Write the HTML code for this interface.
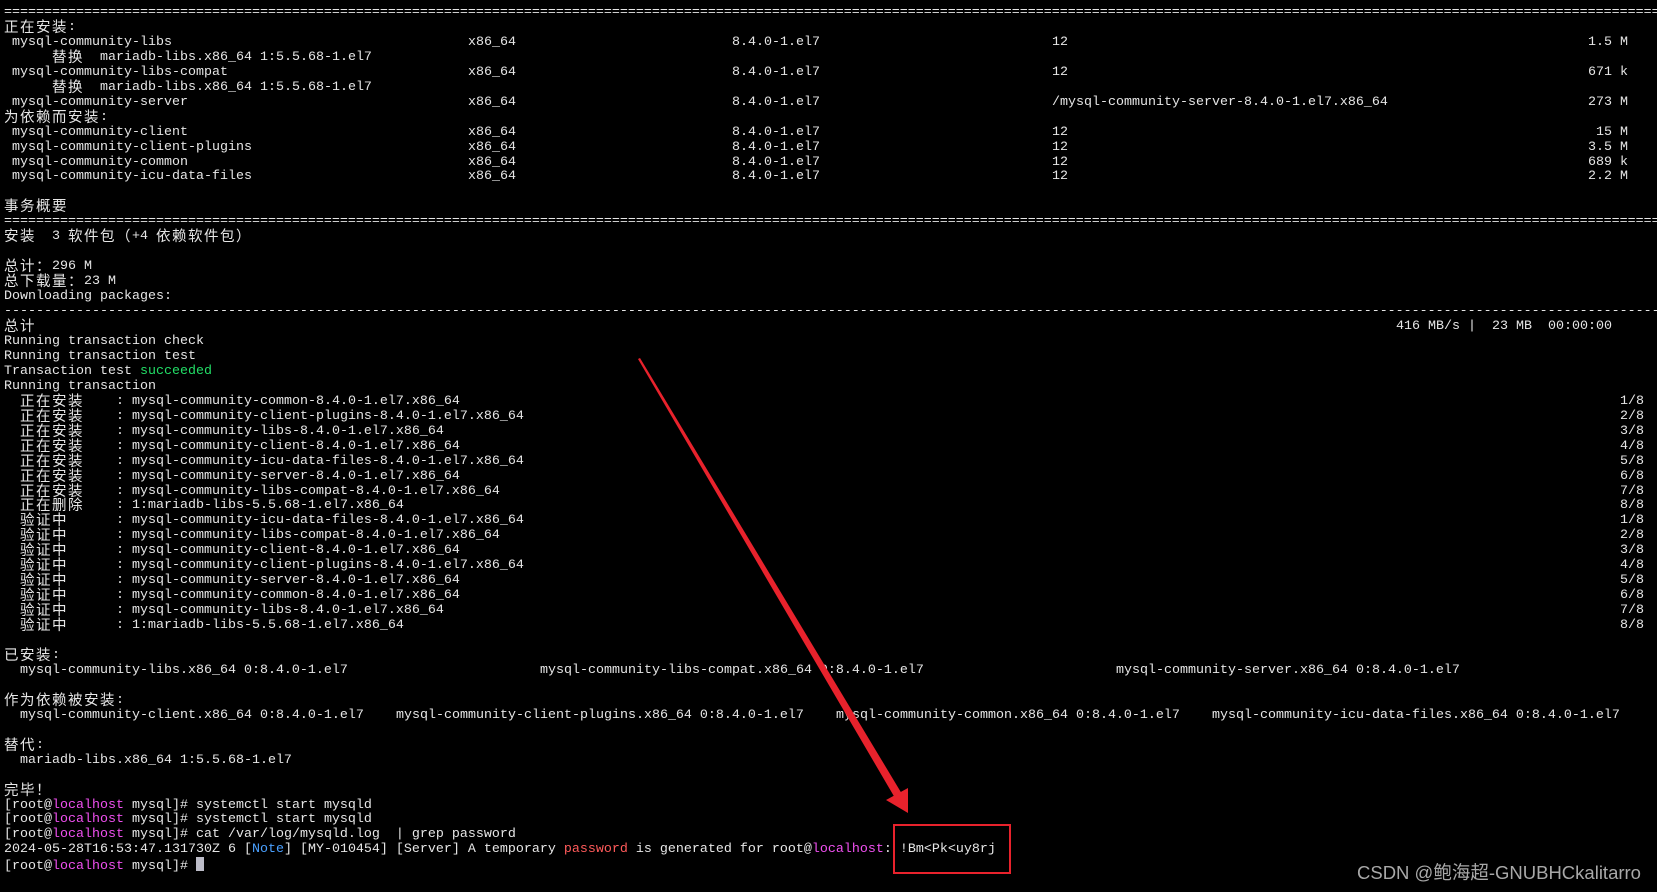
<!DOCTYPE html>
<html><head><meta charset="utf-8">
<style>
html,body{margin:0;padding:0;background:#000;width:1657px;height:892px;overflow:hidden;position:relative}
#t{position:absolute;left:4px;top:5px;font-family:"Liberation Mono","Noto Sans CJK SC",monospace;font-size:13.333px;color:#e6e6e6;width:1653px;overflow:hidden}
.l{position:relative;height:14.96px;line-height:15px;white-space:pre}
.l span.a{position:absolute;top:0}
.c{font-family:"Noto Sans CJK SC",sans-serif;font-size:14.5px;letter-spacing:1.5px;display:inline-block;height:15px;line-height:14px;vertical-align:top}
.m{color:#f050f0}.b{color:#4aa0ff}.r{color:#ff5a5a}.g{color:#22dd66}
.cur{display:inline-block;width:8px;height:14px;background:#bcbcc8;vertical-align:-2px}
#wm{position:absolute;left:1357px;top:859px;font-family:"Liberation Sans","Noto Sans CJK SC",sans-serif;font-size:18.5px;color:#a8a8a8;white-space:nowrap}
</style></head><body>
<div id="t">
<div class="l">====================================================================================================================================================================================================================</div>
<div class="l"><span class="c">正在安装</span>:</div>
<div class="l"> mysql-community-libs<span class="a" style="left:464px">x86_64</span><span class="a" style="left:728px">8.4.0-1.el7</span><span class="a" style="left:1048px">12</span><span class="a" style="left:1584px">1.5 M</span></div>
<div class="l">      <span class="c">替换</span>  mariadb-libs.x86_64 1:5.5.68-1.el7</div>
<div class="l"> mysql-community-libs-compat<span class="a" style="left:464px">x86_64</span><span class="a" style="left:728px">8.4.0-1.el7</span><span class="a" style="left:1048px">12</span><span class="a" style="left:1584px">671 k</span></div>
<div class="l">      <span class="c">替换</span>  mariadb-libs.x86_64 1:5.5.68-1.el7</div>
<div class="l"> mysql-community-server<span class="a" style="left:464px">x86_64</span><span class="a" style="left:728px">8.4.0-1.el7</span><span class="a" style="left:1048px">/mysql-community-server-8.4.0-1.el7.x86_64</span><span class="a" style="left:1584px">273 M</span></div>
<div class="l"><span class="c">为依赖而安装</span>:</div>
<div class="l"> mysql-community-client<span class="a" style="left:464px">x86_64</span><span class="a" style="left:728px">8.4.0-1.el7</span><span class="a" style="left:1048px">12</span><span class="a" style="left:1592px">15 M</span></div>
<div class="l"> mysql-community-client-plugins<span class="a" style="left:464px">x86_64</span><span class="a" style="left:728px">8.4.0-1.el7</span><span class="a" style="left:1048px">12</span><span class="a" style="left:1584px">3.5 M</span></div>
<div class="l"> mysql-community-common<span class="a" style="left:464px">x86_64</span><span class="a" style="left:728px">8.4.0-1.el7</span><span class="a" style="left:1048px">12</span><span class="a" style="left:1584px">689 k</span></div>
<div class="l"> mysql-community-icu-data-files<span class="a" style="left:464px">x86_64</span><span class="a" style="left:728px">8.4.0-1.el7</span><span class="a" style="left:1048px">12</span><span class="a" style="left:1584px">2.2 M</span></div>
<div class="l"> </div>
<div class="l"><span class="c">事务概要</span></div>
<div class="l">====================================================================================================================================================================================================================</div>
<div class="l"><span class="c">安装</span>  3 <span class="c">软件包（</span>+4 <span class="c">依赖软件包）</span></div>
<div class="l"> </div>
<div class="l"><span class="c">总计：</span>296 M</div>
<div class="l"><span class="c">总下载量：</span>23 M</div>
<div class="l">Downloading packages:</div>
<div class="l">--------------------------------------------------------------------------------------------------------------------------------------------------------------------------------------------------------------------------</div>
<div class="l"><span class="c">总计</span><span class="a" style="left:1392px">416 MB/s |  23 MB  00:00:00</span></div>
<div class="l">Running transaction check</div>
<div class="l">Running transaction test</div>
<div class="l">Transaction test <span class="g">succeeded</span></div>
<div class="l">Running transaction</div>
<div class="l">  <span class="c">正在安装</span>    : mysql-community-common-8.4.0-1.el7.x86_64<span class="a" style="left:1616px">1/8</span></div>
<div class="l">  <span class="c">正在安装</span>    : mysql-community-client-plugins-8.4.0-1.el7.x86_64<span class="a" style="left:1616px">2/8</span></div>
<div class="l">  <span class="c">正在安装</span>    : mysql-community-libs-8.4.0-1.el7.x86_64<span class="a" style="left:1616px">3/8</span></div>
<div class="l">  <span class="c">正在安装</span>    : mysql-community-client-8.4.0-1.el7.x86_64<span class="a" style="left:1616px">4/8</span></div>
<div class="l">  <span class="c">正在安装</span>    : mysql-community-icu-data-files-8.4.0-1.el7.x86_64<span class="a" style="left:1616px">5/8</span></div>
<div class="l">  <span class="c">正在安装</span>    : mysql-community-server-8.4.0-1.el7.x86_64<span class="a" style="left:1616px">6/8</span></div>
<div class="l">  <span class="c">正在安装</span>    : mysql-community-libs-compat-8.4.0-1.el7.x86_64<span class="a" style="left:1616px">7/8</span></div>
<div class="l">  <span class="c">正在删除</span>    : 1:mariadb-libs-5.5.68-1.el7.x86_64<span class="a" style="left:1616px">8/8</span></div>
<div class="l">  <span class="c">验证中</span>      : mysql-community-icu-data-files-8.4.0-1.el7.x86_64<span class="a" style="left:1616px">1/8</span></div>
<div class="l">  <span class="c">验证中</span>      : mysql-community-libs-compat-8.4.0-1.el7.x86_64<span class="a" style="left:1616px">2/8</span></div>
<div class="l">  <span class="c">验证中</span>      : mysql-community-client-8.4.0-1.el7.x86_64<span class="a" style="left:1616px">3/8</span></div>
<div class="l">  <span class="c">验证中</span>      : mysql-community-client-plugins-8.4.0-1.el7.x86_64<span class="a" style="left:1616px">4/8</span></div>
<div class="l">  <span class="c">验证中</span>      : mysql-community-server-8.4.0-1.el7.x86_64<span class="a" style="left:1616px">5/8</span></div>
<div class="l">  <span class="c">验证中</span>      : mysql-community-common-8.4.0-1.el7.x86_64<span class="a" style="left:1616px">6/8</span></div>
<div class="l">  <span class="c">验证中</span>      : mysql-community-libs-8.4.0-1.el7.x86_64<span class="a" style="left:1616px">7/8</span></div>
<div class="l">  <span class="c">验证中</span>      : 1:mariadb-libs-5.5.68-1.el7.x86_64<span class="a" style="left:1616px">8/8</span></div>
<div class="l"> </div>
<div class="l"><span class="c">已安装</span>:</div>
<div class="l">  mysql-community-libs.x86_64 0:8.4.0-1.el7<span class="a" style="left:536px">mysql-community-libs-compat.x86_64 0:8.4.0-1.el7</span><span class="a" style="left:1112px">mysql-community-server.x86_64 0:8.4.0-1.el7</span></div>
<div class="l"> </div>
<div class="l"><span class="c">作为依赖被安装</span>:</div>
<div class="l">  mysql-community-client.x86_64 0:8.4.0-1.el7<span class="a" style="left:392px">mysql-community-client-plugins.x86_64 0:8.4.0-1.el7</span><span class="a" style="left:832px">mysql-community-common.x86_64 0:8.4.0-1.el7</span><span class="a" style="left:1208px">mysql-community-icu-data-files.x86_64 0:8.4.0-1.el7</span></div>
<div class="l"> </div>
<div class="l"><span class="c">替代</span>:</div>
<div class="l">  mariadb-libs.x86_64 1:5.5.68-1.el7</div>
<div class="l"> </div>
<div class="l"><span class="c">完毕！</span></div>
<div class="l">[root@<span class="m">localhost</span> mysql]# systemctl start mysqld</div>
<div class="l">[root@<span class="m">localhost</span> mysql]# systemctl start mysqld</div>
<div class="l">[root@<span class="m">localhost</span> mysql]# cat /var/log/mysqld.log  | grep password</div>
<div class="l">2024-05-28T16:53:47.131730Z 6 [<span class="b">Note</span>] [MY-010454] [Server] A temporary <span class="r">password</span> is generated for root@<span class="m">localhost</span>: !Bm&lt;Pk&lt;uy8rj</div>
<div class="l">[root@<span class="m">localhost</span> mysql]# <span class="cur"></span></div>
</div>
<svg width="1657" height="892" style="position:absolute;left:0;top:0">
<polygon points="638,359 640,358 902,794 895,798" fill="#e8222c"/>
<polygon points="886,800 908,788 908,813" fill="#e8222c"/>
<rect x="894" y="825" width="116" height="48" fill="none" stroke="#e8222c" stroke-width="2"/>
</svg>
<div id="wm">CSDN @鲍海超-GNUBHCkalitarro</div>
</body></html>
